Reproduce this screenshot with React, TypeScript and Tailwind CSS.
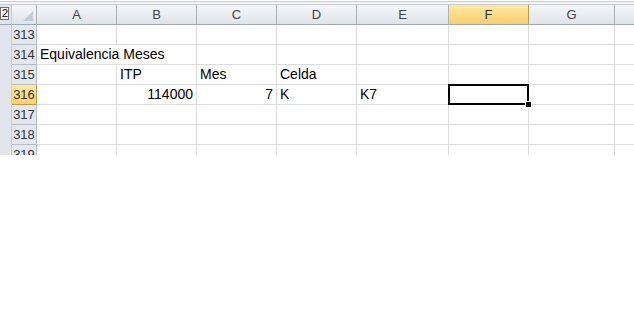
const cols = [
  { name: 'A', w: 80 },
  { name: 'B', w: 80 },
  { name: 'C', w: 80 },
  { name: 'D', w: 80 },
  { name: 'E', w: 92 },
  { name: 'F', w: 80 },
  { name: 'G', w: 86 },
  { name: '', w: 40 },
];

type Cell = { text: string; right?: boolean; overflow?: boolean };

const rows: { n: number; cells: Record<string, Cell> }[] = [
  { n: 313, cells: {} },
  { n: 314, cells: { A: { text: 'Equivalencia Meses', overflow: true } } },
  { n: 315, cells: { B: { text: 'ITP' }, C: { text: 'Mes' }, D: { text: 'Celda' } } },
  {
    n: 316,
    cells: {
      B: { text: '114000', right: true },
      C: { text: '7', right: true },
      D: { text: 'K' },
      E: { text: 'K7' },
    },
  },
  { n: 317, cells: {} },
  { n: 318, cells: {} },
  { n: 319, cells: {} },
];

function ColHeader({ name, w }: { name: string; w: number }) {
  const active = name === 'F';
  return (
    <div
      style={{ width: w }}
      className={
        'shrink-0 h-full flex items-center justify-center border-r text-[13px] ' +
        (active
          ? 'bg-gradient-to-b from-[#fde9a4] to-[#f9cf6a] border-[#c29b3c] text-[#333]'
          : 'bg-gradient-to-b from-[#f4f6f9] to-[#dfe4ea] border-[#a9b2bd] text-[#444]')
      }
    >
      {name}
    </div>
  );
}

function Row({ n, cells }: { n: number; cells: Record<string, Cell> }) {
  const active = n === 316;
  return (
    <div className="flex h-[20px] shrink-0">
      <div className="w-[12px] shrink-0 bg-[#e2e6ec] border-r border-[#c7ccd3]" />
      <div
        className={
          'w-[25px] shrink-0 flex items-center justify-center border-b border-r text-[13px] ' +
          (active
            ? 'bg-gradient-to-b from-[#fde9a4] to-[#f9cf6a] border-[#c29b3c] text-[#333]'
            : 'bg-[#e4e8ee] border-[#b5bcc6] text-[#333]')
        }
      >
        {n}
      </div>
      {cols.map((c, i) => {
        const cell = cells[c.name];
        const sel = active && c.name === 'F';
        return (
          <div
            key={i}
            style={{ width: c.w }}
            className={
              'shrink-0 relative h-full border-b border-[#dadcdd] ' +
              (cell?.overflow ? '' : 'border-r ') +
              (sel ? 'z-10' : '')
            }
          >
            {cell && (
              <span
                className={
                  'absolute top-0 h-full flex items-center whitespace-nowrap text-[14px] text-black ' +
                  (cell.right ? 'right-[3px]' : 'left-[3px]')
                }
              >
                {cell.text}
              </span>
            )}
            {sel && (
              <>
                <div className="absolute -left-[1px] -top-[1px] w-[81px] h-[21px] border-2 border-black" />
                <div className="absolute -right-[4px] -bottom-[4px] w-[7px] h-[7px] bg-black border border-white" />
              </>
            )}
          </div>
        );
      })}
    </div>
  );
}

export default function App() {
  return (
    <div
      className="w-[634px] h-[309px] bg-white overflow-hidden"
      style={{ fontFamily: '"Liberation Sans", Arial, sans-serif' }}
    >
      <div className="border-t border-b border-[#c8cdd3] bg-[#f3f5f8] mt-[1px] h-[4px]" />
      <div className="h-[150px] overflow-hidden flex flex-col">
        <div className="flex h-[20px] shrink-0 border-b border-[#9ea7b2]">
          <div className="w-[12px] shrink-0 bg-[#e2e6ec] border-r border-[#c7ccd3] relative">
            <div className="absolute left-0 top-[2px] w-[9px] h-[13px] bg-white border border-[#707070] text-[11px] leading-[11px] flex items-center justify-end overflow-hidden text-black">
              2
            </div>
          </div>
          <div className="w-[25px] shrink-0 bg-gradient-to-b from-[#f4f6f9] to-[#dfe4ea] border-r border-[#a9b2bd] relative">
            <svg className="absolute right-[3px] bottom-[3px]" width="10" height="10" viewBox="0 0 10 10">
              <polygon points="10,0 10,10 0,10" fill="#c6ccd4" />
            </svg>
          </div>
          {cols.map((c, i) => (
            <ColHeader key={i} name={c.name} w={c.w} />
          ))}
        </div>
        {rows.map((r) => (
          <Row key={r.n} n={r.n} cells={r.cells} />
        ))}
      </div>
    </div>
  );
}
